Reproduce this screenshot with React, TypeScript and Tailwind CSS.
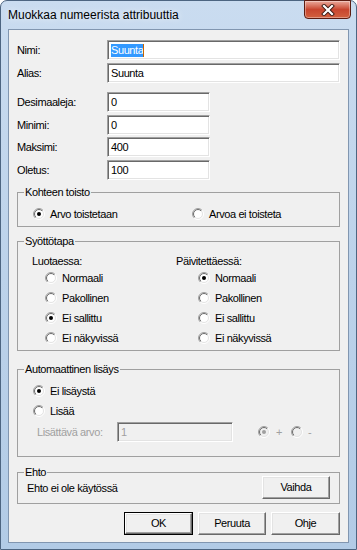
import React from "react";

function Radio({ checked = false, disabled = false }: { checked?: boolean; disabled?: boolean }) {
  return (
    <svg width="12" height="12" viewBox="0 0 12 12" className="shrink-0">
      <defs>
        <linearGradient id="rgOuter" x1="0" y1="0" x2="1" y2="1">
          <stop offset="0" stopColor="#a0a0a0" />
          <stop offset="0.5" stopColor="#a0a0a0" />
          <stop offset="0.5" stopColor="#ffffff" />
          <stop offset="1" stopColor="#ffffff" />
        </linearGradient>
        <linearGradient id="rgInner" x1="0" y1="0" x2="1" y2="1">
          <stop offset="0" stopColor="#696969" />
          <stop offset="0.5" stopColor="#696969" />
          <stop offset="0.5" stopColor="#e3e3e3" />
          <stop offset="1" stopColor="#e3e3e3" />
        </linearGradient>
      </defs>
      <circle cx="6" cy="6" r="5.5" fill="none" stroke="url(#rgOuter)" strokeWidth="1" />
      <circle cx="6" cy="6" r="4.5" fill={disabled ? "#f0f0f0" : "#ffffff"} stroke="url(#rgInner)" strokeWidth="1" />
      {checked && <circle cx="6" cy="6" r="2" fill={disabled ? "#a0a0a0" : "#000000"} />}
    </svg>
  );
}

function RadioItem({ label, checked, disabled }: { label: string; checked?: boolean; disabled?: boolean }) {
  return (
    <div className="flex h-[20px] items-center gap-[5px]">
      <Radio checked={checked} disabled={disabled} />
      <span className={disabled ? "text-[#a0a0a0]" : ""}>{label}</span>
    </div>
  );
}

const inputCls =
  "flex h-[20px] items-center border border-t-[#a0a0a0] border-l-[#a0a0a0] border-b-white border-r-white shadow-[inset_1px_1px_0_#696969,inset_-1px_-1px_0_#e3e3e3] pl-[3px]";

function Button({ label, def = false, w }: { label: string; def?: boolean; w: string }) {
  if (def) {
    return (
      <div className={`${w} h-[23px] border border-black`}>
        <div className="flex h-full items-center justify-center border border-t-white border-l-white border-b-[#696969] border-r-[#696969] bg-[#f0f0f0] shadow-[inset_-1px_-1px_0_#a0a0a0,inset_1px_1px_0_#e3e3e3]">
          {label}
        </div>
      </div>
    );
  }
  return (
    <div
      className={`${w} flex h-[23px] items-center justify-center border border-t-white border-l-white border-b-[#696969] border-r-[#696969] bg-[#f0f0f0] shadow-[inset_-1px_-1px_0_#a0a0a0,inset_1px_1px_0_#e3e3e3]`}
    >
      {label}
    </div>
  );
}

export default function App() {
  return (
    <div className="h-[550px] w-[357px] font-['Liberation_Sans'] text-[11px] leading-[13px] tracking-[-0.4px] text-black">
      <div className="relative flex h-full flex-col rounded-t-[7px] border border-[#4d6581] bg-gradient-to-b from-[#cadcf0] via-[#bcd2ea] to-[#b2cbe6] px-[7px] pb-[6px]">
        {/* title bar */}
        <div className="flex h-[28px] items-center text-[12px] tracking-normal">
          <span className="[text-shadow:0_0_6px_rgba(255,255,255,0.9)]">Muokkaa numeerista attribuuttia</span>
        </div>
        {/* close button */}
        <div className="absolute right-[5px] top-[-1px] flex h-[19px] w-[47px] items-center justify-center rounded-b-[4px] border border-[#5c1c12] bg-gradient-to-b from-[#e9a99c] via-[#c8452f] to-[#d2603f] shadow-[inset_0_0_0_1px_rgba(255,255,255,0.35)]">
          <svg width="14" height="12" viewBox="0 0 14 12">
            <path d="M3 2 L11 10 M11 2 L3 10" stroke="#3a1a14" strokeWidth="4" strokeLinecap="square" />
            <path d="M3 2 L11 10 M11 2 L3 10" stroke="#ffffff" strokeWidth="2.2" strokeLinecap="square" />
          </svg>
        </div>

        {/* client */}
        <div className="flex flex-1 flex-col border border-[#8196b0] bg-[#f0f0f0] px-[8px]">
          {/* Nimi */}
          <div className="mt-[10px] flex items-center">
            <span className="w-[90px]">Nimi:</span>
            <div className={`${inputCls} flex-1 bg-white`}>
              <span className="bg-[#3399ff] text-white">Suunta</span>
              <span className="h-[13px] w-[1px] bg-[#c86400]" />
            </div>
          </div>
          <div className="mt-[3px] flex items-center">
            <span className="w-[90px]">Alias:</span>
            <div className={`${inputCls} flex-1 bg-white`}>Suunta</div>
          </div>
          <div className="mt-[9px] flex items-center">
            <span className="w-[90px]">Desimaaleja:</span>
            <div className={`${inputCls} w-[103px] bg-white`}>0</div>
          </div>
          <div className="mt-[3px] flex items-center">
            <span className="w-[90px]">Minimi:</span>
            <div className={`${inputCls} w-[103px] bg-white`}>0</div>
          </div>
          <div className="mt-[2px] flex items-center">
            <span className="w-[90px]">Maksimi:</span>
            <div className={`${inputCls} w-[103px] bg-white`}>400</div>
          </div>
          <div className="mt-[3px] flex items-center">
            <span className="w-[90px]">Oletus:</span>
            <div className={`${inputCls} w-[103px] bg-white`}>100</div>
          </div>

          {/* Kohteen toisto */}
          <div className="relative mt-[12px] border border-[#a0a0a0] pb-[2px] pl-[15px] pt-[11px]">
            <span className="absolute left-[6px] top-[-7px] bg-[#f0f0f0] px-[1px]">Kohteen toisto</span>
            <div className="flex">
              <div className="w-[159px]">
                <RadioItem label="Arvo toistetaan" checked />
              </div>
              <RadioItem label="Arvoa ei toisteta" />
            </div>
          </div>

          {/* Syöttötapa */}
          <div className="relative mt-[14px] flex border border-[#a0a0a0] pb-[2px] pl-[14px] pt-[13px]">
            <span className="absolute left-[6px] top-[-7px] bg-[#f0f0f0] px-[1px]">Syöttötapa</span>
            <div className="w-[144px]">
              <div>Luotaessa:</div>
              <div className="pl-[13px]">
                <RadioItem label="Normaali" />
                <RadioItem label="Pakollinen" />
                <RadioItem label="Ei sallittu" checked />
                <RadioItem label="Ei näkyvissä" />
              </div>
            </div>
            <div>
              <div>Päivitettäessä:</div>
              <div className="pl-[22px]">
                <RadioItem label="Normaali" checked />
                <RadioItem label="Pakollinen" />
                <RadioItem label="Ei sallittu" />
                <RadioItem label="Ei näkyvissä" />
              </div>
            </div>
          </div>

          {/* Automaattinen lisäys */}
          <div className="relative mt-[18px] border border-[#a0a0a0] pb-[14px] pt-[11px]">
            <span className="absolute left-[6px] top-[-7px] bg-[#f0f0f0] px-[1px]">Automaattinen lisäys</span>
            <div className="pl-[15px]">
              <RadioItem label="Ei lisäystä" checked />
              <RadioItem label="Lisää" />
            </div>
            <div className="mt-[1px] flex items-center pl-[19px]">
              <span className="w-[80px] text-[#a0a0a0]">Lisättävä arvo:</span>
              <div className={`${inputCls} w-[116px] bg-[#f0f0f0] text-[#a0a0a0]`}>1</div>
              <div className="ml-[25px] flex items-center">
                <Radio checked disabled />
                <span className="ml-[6px] text-[#a0a0a0]">+</span>
                <span className="ml-[9px]">
                  <Radio disabled />
                </span>
                <span className="ml-[5px] text-[#a0a0a0]">-</span>
              </div>
            </div>
          </div>

          {/* Ehto */}
          <div className="relative mt-[15px] flex items-center justify-between border border-[#a0a0a0] pb-[4px] pl-[9px] pr-[9px] pt-[3px]">
            <span className="absolute left-[6px] top-[-7px] bg-[#f0f0f0] px-[1px]">Ehto</span>
            <span className="pt-[2px]">Ehto ei ole käytössä</span>
            <Button label="Vaihda" w="w-[68px]" />
          </div>

          {/* buttons */}
          <div className="mt-[8px] flex justify-end gap-[5px]">
            <Button label="OK" def w="w-[69px]" />
            <Button label="Peruuta" w="w-[68px]" />
            <Button label="Ohje" w="w-[69px]" />
          </div>
        </div>
      </div>
    </div>
  );
}
